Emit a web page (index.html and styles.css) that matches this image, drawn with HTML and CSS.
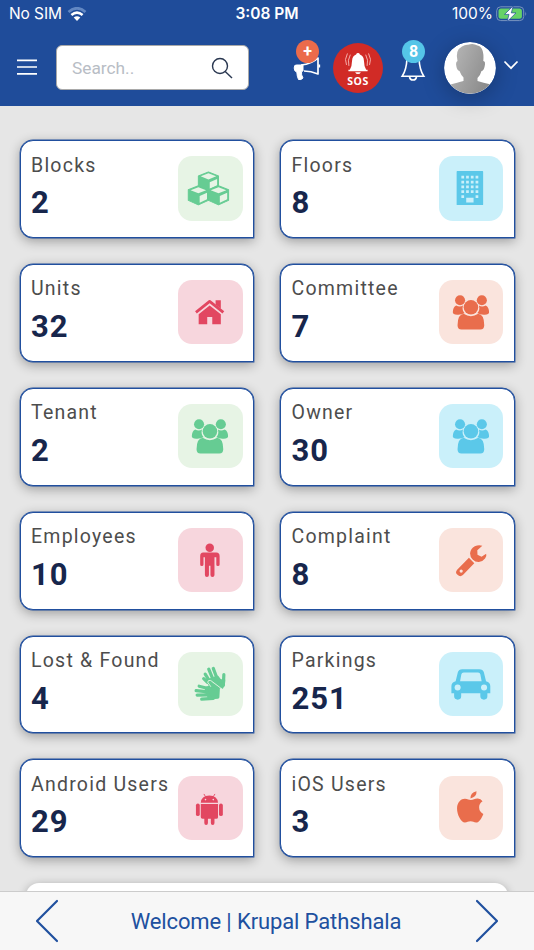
FILE: index.html
```html
<!DOCTYPE html>
<html lang="en">
<head>
<meta charset="utf-8">
<meta name="viewport" content="width=device-width">
<title>Society dashboard</title>
<link rel="stylesheet" href="styles.css">
</head>
<body>
<svg class="defs" width="0" height="0" aria-hidden="true">
  <symbol id="cube" viewBox="-11 -1 22 22" overflow="visible">
    <path d="M0 0 10 4V14.500L0 19-10 14.500V4Z" fill="currentColor" stroke="currentColor" stroke-linejoin="round"/>
    <path class="cut" d="M0 1.400 7.700 4.400 0 7.500-7.700 4.400ZM1.300 10.300 8.600 7V13.300L1.300 16.800Z"/>
  </symbol>
  <symbol id="users" viewBox="0 0 64 64">
    <g fill="currentColor"><circle cx="20.900" cy="20.100" r="5"/><circle cx="42.500" cy="20.100" r="5"/>
    <path d="M17 25.200Q20.500 27.400 23.800 25.400 22.500 30 25.400 33.100 22 34.800 18 34.500 13.700 34.200 13.700 32 13.800 27 17 25.200ZM46.400 25.200Q42.900 27.400 39.600 25.400 40.900 30 38 33.100 41.400 34.800 45.400 34.500 49.700 34.200 49.700 32 49.600 27 46.400 25.200Z"/>
    <circle cx="31.700" cy="27.100" r="7.200"/>
    <path d="M24.500 33.500Q31.500 38.300 38.900 33.500 44.800 34 44.900 44.800 44.900 49 41 49H22.300Q18.400 49 18.400 44.800 18.500 34 24.500 33.500Z"/></g>
  </symbol>
</svg>
<div class="app">
  <header>
    <div class="status">
      <div class="carrier">No SIM
        <svg width="20" height="15" viewBox="0 0 20 15" fill="none"><path d="M1.500 5Q10-2.500 18.500 5" stroke="#6287c2" stroke-width="2.700"/><path d="M4.400 8Q10 3.300 15.600 8" stroke="#fff" stroke-width="2.600"/><path d="M6.700 10.500Q10 7.800 13.300 10.500L10 14Z" fill="#fff"/></svg>
      </div>
      <div class="clock">3:08 PM</div>
      <div class="power">100%
        <svg width="32" height="16" viewBox="0 0 32 16"><rect x=".7" y=".8" width="27" height="13.800" rx="4" fill="none" stroke="#7894bf"/><rect x="2.500" y="2.600" width="23.400" height="10.200" rx="2.500" fill="#66d267"/><path d="M29.300 5.500Q31 7.500 29.300 10Z" fill="#7894bf"/><path d="M17.200 0 8.500 8.400H13L11.200 15.500 20 6.900H15.300Z" fill="#fff" stroke="#1f4c9a" stroke-width=".7"/></svg>
      </div>
    </div>
    <nav>
      <svg class="menu" width="20" height="18" viewBox="0 0 20 18" stroke="#fff" stroke-width="1.700"><path d="M0 2.400H20M0 9H20M0 15.800H20"/></svg>
      <div class="search"><span>Search..</span>
        <svg width="22" height="22" viewBox="0 0 22 22" fill="none" stroke="#293750" stroke-width="1.400"><circle cx="9" cy="9" r="7.500"/><path d="M14.200 14.500 21 21"/></svg>
      </div>
      <div class="notice"><svg width="30" height="30" viewBox="0 0 30 30" fill="none" stroke="#fff" stroke-width="1.700" stroke-linejoin="round"><path d="M9 13Q20 12 26 6V22Q19 19 12 19" /><path fill="#fff" stroke-width="1" d="M4.500 13H11V19L9.500 19.500Q9 23 11 26Q9 28.300 6.500 27.500 5 24.500 4.800 20Q2.200 19.500 2.200 16T4.500 13Z"/><path d="M27.300 12.500V15.500"/></svg><b class="badge plus">+</b></div>
      <div class="sos"><svg width="28" height="24" viewBox="0 0 28 24"><path fill="#fff" d="M14 1Q15.500 1 16 2.500 20 4 20.200 9 20.300 15 22.500 18.500H24V20.200H4V18.500H5.500Q7.700 15 7.800 9 8 4 12 2.500 12.500 1 14 1ZM11 21H17Q16 23 14 23T11 21Z"/><path d="M6 2.800Q2.800 8.500 4.500 14.500M3 1.500Q-.6 8 2 13.500M22 2.800Q25.200 8.500 23.500 14.500M25 1.500Q28.600 8 26 13.500" fill="none" stroke="#f6b2ae"/></svg><span>SOS</span></div>
      <div class="alerts"><svg width="26" height="28" viewBox="0 0 26 28" fill="none" stroke="#fff" stroke-width="1.600"><path d="M7 5Q6.500 17 2.200 23.200H23.800Q19.500 17 19 5M9.500 24Q10 27 13 27T16.500 24"/></svg><b class="badge count">8</b></div>
      <svg class="avatar" width="52" height="52" viewBox="0 0 52 52"><defs><linearGradient id="face" x2="1" y2=".5"><stop stop-color="#bbb"/><stop offset="1" stop-color="#8d8d8d"/></linearGradient><clipPath id="round"><circle cx="26" cy="26" r="25.700"/></clipPath></defs><circle cx="26" cy="26" r="25.900" fill="#fff"/><path clip-path="url(#round)" fill="url(#face)" d="M13.500 19Q11 8 18 4.500 21 2.500 24 2.800 29 .8 33.500 3.500 40.500 5 39.300 19 42 19 40.500 25 39.500 29 37.500 29 36.500 33 33.500 36V39Q39 40.500 47 42.500V52H5V43Q14 40.500 19.500 39V35.500Q17 33 15.500 29 13 28.500 12.300 24 11.500 20 13.500 19Z"/></svg>
      <svg class="chevron" width="16" height="10" viewBox="0 0 16 10" fill="none" stroke="#fff" stroke-width="1.700"><path d="M1.500 1.500 8 8.200 14.500 1.500"/></svg>
    </nav>
  </header>
  <main>
    <div class="cards">
      <section class="card"><div><h2>Blocks</h2><strong>2</strong></div><svg class="tile green" viewBox="0 0 64 64"><use href="#cube" x="19.200" y="14.800" width="22" height="22"/><use href="#cube" x="9.200" y="28.500" width="22" height="22"/><use href="#cube" x="29.200" y="28.500" width="22" height="22"/></svg></section>
      <section class="card"><div><h2>Floors</h2><strong>8</strong></div><svg class="tile blue" viewBox="0 0 64 64"><rect x="17.500" y="15" width="26.300" height="33.600" rx=".6" fill="currentColor"/><path class="cut" d="M22.200 19.700h2.700v2.700h-2.700zM26.900 19.700h2.700v2.700h-2.700zM31.600 19.700h2.700v2.700h-2.700zM36.300 19.700h2.700v2.700h-2.700zM22.200 24.500h2.700v2.700h-2.700zM26.900 24.500h2.700v2.700h-2.700zM31.600 24.500h2.700v2.700h-2.700zM36.300 24.500h2.700v2.700h-2.700zM22.200 29.300h2.700v2.700h-2.700zM26.900 29.300h2.700v2.700h-2.700zM31.600 29.300h2.700v2.700h-2.700zM36.300 29.300h2.700v2.700h-2.700zM22.200 34.100h2.700v2.700h-2.700zM26.900 34.100h2.700v2.700h-2.700zM31.600 34.100h2.700v2.700h-2.700zM36.300 34.100h2.700v2.700h-2.700zM22.200 38.900h2.700v2.700h-2.700zM36.300 38.900h2.700v2.700h-2.700zM27 41.500h7.300v4.700H27z"/></svg></section>
      <section class="card"><div><h2>Units</h2><strong>32</strong></div><svg class="tile pink" viewBox="0 0 64 64"><path fill="currentColor" d="M37.300 20h5.200v8.500l-5.200-4.200zM31.400 25.200 42.500 34V43.900H34V36.800H29V43.900H20.500V34Z"/><path d="M17.800 32.200 31.400 21.300 45 32.200" fill="none" stroke="currentColor" stroke-width="2.800" stroke-linejoin="round"/></svg></section>
      <section class="card"><div><h2>Committee</h2><strong>7</strong></div><svg class="tile orange"><use href="#users"/></svg></section>
      <section class="card"><div><h2>Tenant</h2><strong>2</strong></div><svg class="tile green"><use href="#users"/></svg></section>
      <section class="card"><div><h2>Owner</h2><strong>30</strong></div><svg class="tile blue"><use href="#users"/></svg></section>
      <section class="card"><div><h2>Employees</h2><strong>10</strong></div><svg class="tile pink" viewBox="0 0 64 64"><g fill="currentColor"><circle cx="31.500" cy="19.700" r="4.200"/><path d="M25 24.300H38Q41.300 24.300 41.300 28V36.200Q41.300 37.800 39.600 37.800T38 36.200V29H36.200V46.700Q36.200 48.600 34.200 48.600T32.200 46.700V37.500H30.700V46.700Q30.700 48.600 28.700 48.600T26.700 46.700V29H25.300V36.200Q25.300 37.800 23.600 37.800T22 36.200V28Q22 24.300 25 24.300Z"/></g></svg></section>
      <section class="card"><div><h2>Complaint</h2><strong>8</strong></div><svg class="tile orange" viewBox="0 0 64 64"><path fill="currentColor" d="M43 17.700Q39.500 16.300 35.500 18.200 31.500 20.400 30.800 25 30.800 28.500 33.400 31.200 36 33.800 39.500 33.700 43.500 33.200 45.700 30.200 47.600 27.600 46.800 25.500L42.200 28.600 38.200 26.500 38 22.200Z"/><path fill="currentColor" fill-rule="evenodd" d="M29.700 29.500 35 34.900 23.700 46.700Q21 49 18.400 46.500 15.600 44.400 18 41.500ZM23.600 42.700A1.600 1.600 0 1 0 20.400 42.700 1.600 1.600 0 1 0 23.600 42.700Z"/></svg></section>
      <section class="card"><div><h2>Lost &amp; Found</h2><strong>4</strong></div><svg class="tile green" viewBox="0 0 64 64"><g stroke="currentColor" stroke-width="3.200" stroke-linecap="round" stroke-linejoin="round"><path d="M27 22 32 30M30.500 17 35 28M35 16.300 39 27M25.500 26.500 29 30M45.500 22.500 45 33" fill="none"/><path fill="currentColor" d="M31 28 39 25 42 29 45.300 28Q45.500 32 43.500 35L35 29Z"/><path d="M21 34 31 36.500M18 38.300 30 39.500M19 42.700 31 42.500M23.500 46.700 35 46" fill="none"/><path fill="currentColor" d="M28 36 32.500 34.500 30.300 29.500 40 36 39.500 44.800 31 45.500Z"/></g><path d="M32.600 34.500 29.500 30Q29.600 27.500 32.500 28.300L42 35.500 43.800 36.500" class="line"/></svg></section>
      <section class="card"><div><h2>Parkings</h2><strong>251</strong></div><svg class="tile blue" viewBox="0 0 64 64"><path fill="currentColor" fill-rule="evenodd" d="M23 17H40Q43.600 17 44.500 20.200L46.700 29Q50.900 30 50.900 34V41H48V44Q48 47.300 44.600 47.300T41 44V41H22V44Q22 47.300 18.600 47.300T15 44V41H12.300V34Q12.300 30 16.500 29L18.700 20.200Q19.600 17 23 17ZM24.500 20.300Q22.500 20.300 22.200 22L20.900 29H42.300L41 22Q40.600 20.300 38.800 20.300Z"/><circle class="cut" cx="18.500" cy="35.300" r="3"/><circle class="cut" cx="44.700" cy="35.300" r="3"/></svg></section>
      <section class="card"><div><h2>Android Users</h2><strong>29</strong></div><svg class="tile pink" viewBox="0 0 64 64"><g fill="currentColor"><path d="M22.600 26.600Q23 19.500 31.100 19.300 39.300 19.500 39.700 26.600ZM22.600 27.800H39.700V41Q39.700 42.500 38 42.500H36.200V46.700Q36.200 48.600 34.400 48.600T32.600 46.700V42.500H29.700V46.700Q29.700 48.600 27.900 48.600T26.100 46.700V42.500H24.400Q22.600 42.500 22.600 40.800Z"/><rect x="17.800" y="27.300" width="3.800" height="12.500" rx="1.900"/><rect x="40.700" y="27.300" width="3.800" height="12.500" rx="1.900"/></g><path d="M25.700 17.800 27.300 20.500M36.700 17.800 35 20.500" stroke="currentColor" stroke-width=".9"/><circle class="cut" cx="27.300" cy="23.400" r=".8"/><circle class="cut" cx="35" cy="23.400" r=".8"/></svg></section>
      <section class="card"><div><h2>iOS Users</h2><strong>3</strong></div><svg class="tile orange" viewBox="0 0 64 64"><path fill="currentColor" d="M37.200 15.200Q37.700 20.500 31.200 22.400 31 16.800 37.200 15.200ZM31.500 23.800C34 23.800 35.500 22.200 38.500 22.300Q41.500 22.500 43.200 25 39.700 27.200 39.800 31.200 40 35.600 44 37.600C42.200 42 39.800 46.200 36.800 46.200 34.500 46.200 33.800 45 31.300 45S28 46.200 25.700 46.200C22 46.200 17.800 38.500 17.900 32 18 25.500 22.400 22.300 25.800 22.500 28.500 22.600 29.700 23.800 31.500 23.800Z"/></svg></section>
    </div>
    <div class="next-panel"></div>
  </main>
  <footer>
    <svg width="24" height="44" viewBox="0 0 24 44"><path d="M22 2 2 22 22 42"/></svg>
    <span>Welcome | Krupal Pathshala</span>
    <svg width="24" height="44" viewBox="0 0 24 44"><path d="M2 2 22 22 2 42"/></svg>
  </footer>
</div>
</body>
</html>
```
FILE: styles.css
```css
* { box-sizing: border-box; }
body { margin: 0; font-family: Roboto, sans-serif; }
.defs { display: block; position: absolute; }
.app { height: 950px; display: flex; flex-direction: column; overflow: hidden; background: #e6e6e6; }
header { flex: 0 0 106px; background: #1f4c9a; color: #fff; }
.status { height: 28px; display: grid; grid-template-columns: 1fr auto 1fr; align-items: center; padding: 0 6px 0 9px; font: 15.5px/28px Inter, sans-serif; }
.status svg { flex: none; }
.carrier, .power { display: flex; align-items: center; gap: 5px; letter-spacing: -.1px; }
.power { justify-content: flex-end; gap: 3px; letter-spacing: 0; }
.clock { font-weight: 600; margin-left: -3px; }
nav { height: 78px; display: flex; align-items: center; padding: 0 15px 0 17px; }
.search { width: 193px; height: 45px; margin-left: 19px; padding: 0 15px; display: flex; align-items: center; justify-content: space-between; background: #fff; border: 1.5px solid #a9a9a9; border-radius: 6px; color: #b8bdc5; font-size: 17.300px; }
.search span { padding-top: 1px; }
.search svg { margin-top: 2px; }
.notice { position: relative; width: 30px; height: 30px; margin-left: 43px; }
.sos { flex: none; width: 50px; height: 50px; margin: 1px 0 0 11px; display: flex; flex-direction: column; align-items: center; justify-content: flex-end; padding-bottom: 6px; background: #d12b26; border-radius: 50%; }
.sos svg { height: 23px; }
.sos span { font: 700 10.500px/12px "Open Sans", sans-serif; letter-spacing: .5px; }
.alerts { position: relative; width: 26px; height: 28px; margin-left: 17px; }
.badge { position: absolute; width: 23px; height: 23px; border-radius: 50%; font-size: 16px; line-height: 23px; text-align: center; }
.plus { left: 4px; top: -12px; background: #eb6b4b; }
.count { left: 2px; top: -13px; background: #55c5e8; }
.avatar { flex: none; margin-left: 18px; margin-top: 1px; border-radius: 50%; box-shadow: 0 4px 22px rgba(0,0,0,.26); }
.chevron { margin-left: 7px; margin-bottom: 4px; }
main { flex: 1; min-height: 0; overflow: hidden; padding: 34px 19.500px 0; }
.cards { display: grid; grid-template-columns: 1fr 1fr; gap: 26px; }
.card { height: 97.900px; padding: 12.500px 10.500px 0 10.500px; display: flex; justify-content: space-between; background: #fff; border: 1px solid #214f9e; border-radius: 13px 13px 0 13px; box-shadow: 0 0 0 .4px #214f9e, 0 3px 12px rgba(0,0,0,.33); }
.card div { white-space: nowrap; }
h2 { margin: 0; font-size: 19.500px; font-weight: 400; line-height: 24px; letter-spacing: 1.230px; color: #4d4d4d; }
.card strong { display: block; margin-top: 9.500px; font-size: 31px; line-height: 32px; letter-spacing: 1px; color: #17264c; }
.tile { --tint: #e7f4e5; flex: none; width: 64.500px; height: 64.500px; margin: 2.600px 0 0 -20px; border-radius: 14px; background: var(--tint); }
.green { color: #66cc93; }
.blue { --tint: #caf0fa; color: #5bc8e9; }
.pink { --tint: #f7d6dd; color: #e24761; }
.orange { --tint: #fae4dd; color: #e96d4c; }
.cut { fill: var(--tint); }
.line { fill: none; stroke: var(--tint); stroke-width: .9; }
.next-panel { height: 90px; margin: 26px 6.500px 0; background: #fff; border-radius: 13px; box-shadow: 0 2px 10px rgba(0,0,0,.3); }
footer { flex: 0 0 59px; display: flex; align-items: center; justify-content: space-between; padding: 0 35px; border-top: 1px solid #ccc; background: #f7f7f7; color: #20509f; font-size: 22px; letter-spacing: -.12px; }
footer svg { fill: none; stroke: #20509f; stroke-width: 2.200; stroke-linecap: round; stroke-linejoin: round; }
footer span { margin-left: -2px; }
```
